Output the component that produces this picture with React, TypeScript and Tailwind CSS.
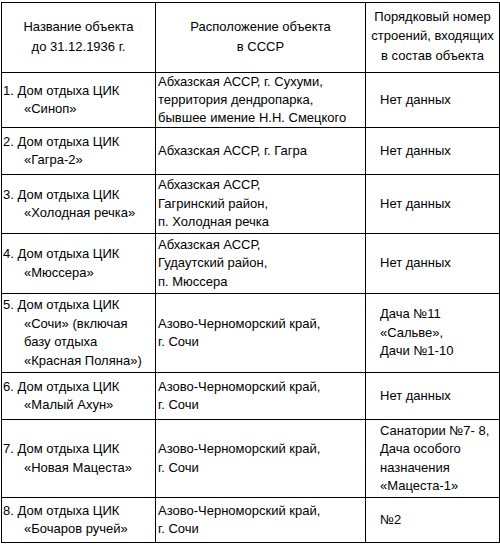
type Row = {
  name: string[];
  place: string[];
  num: string[];
  h: string;
};

const rows: Row[] = [
  {
    name: ["1. Дом отдыха ЦИК", "«Синоп»"],
    place: ["Абхазская АССР, г. Сухуми,", "территория дендропарка,", "бывшее имение Н.Н. Смецкого"],
    num: ["Нет данных"],
    h: "h-[55px] leading-[18px]",
  },
  {
    name: ["2. Дом отдыха ЦИК", "«Гагра-2»"],
    place: ["Абхазская АССР, г. Гагра"],
    num: ["Нет данных"],
    h: "h-[47px]",
  },
  {
    name: ["3. Дом отдыха ЦИК", "«Холодная речка»"],
    place: ["Абхазская АССР,", "Гагринский район,", "п. Холодная речка"],
    num: ["Нет данных"],
    h: "h-[59px]",
  },
  {
    name: ["4. Дом отдыха ЦИК", "«Мюссера»"],
    place: ["Абхазская АССР,", "Гудаутский район,", "п. Мюссера"],
    num: ["Нет данных"],
    h: "h-[60px]",
  },
  {
    name: ["5. Дом отдыха ЦИК", "«Сочи» (включая", "базу отдыха", "«Красная Поляна»)"],
    place: ["Азово-Черноморский край,", "г. Сочи"],
    num: ["Дача №11", "«Сальве»,", "Дачи №1-10"],
    h: "h-[79px]",
  },
  {
    name: ["6. Дом отдыха ЦИК", "«Малый Ахун»"],
    place: ["Азово-Черноморский край,", "г. Сочи"],
    num: ["Нет данных"],
    h: "h-[47px]",
  },
  {
    name: ["7. Дом отдыха ЦИК", "«Новая Мацеста»"],
    place: ["Азово-Черноморский край,", "г. Сочи"],
    num: ["Санатории №7- 8,", "Дача особого", "назначения", "«Мацеста-1»"],
    h: "h-[78px]",
  },
  {
    name: ["8. Дом отдыха ЦИК", "«Бочаров ручей»"],
    place: ["Азово-Черноморский край,", "г. Сочи"],
    num: ["№2"],
    h: "h-[45px]",
  },
];

const Lines = ({ items }: { items: string[] }) => (
  <>
    {items.map((t, i) => (
      <div key={i} className="whitespace-nowrap">
        {t}
      </div>
    ))}
  </>
);

export default function App() {
  return (
    <div className="w-[500px] h-[545px] bg-white pt-[2px] pl-[1px] font-['Liberation_Sans',Arial,sans-serif] text-[13px] leading-[18.5px] text-black">
      <table className="border-collapse table-fixed w-[498px]">
        <colgroup>
          <col className="w-[154px]" />
          <col className="w-[210px]" />
          <col className="w-[134px]" />
        </colgroup>
        <thead>
          <tr className="h-[70px] leading-[19.5px]">
            <th className="border border-black font-normal text-center align-middle pb-[2px]">
              <Lines items={["Название объекта", "до 31.12.1936 г."]} />
            </th>
            <th className="border border-black font-normal text-center align-middle pb-[2px]">
              <Lines items={["Расположение объекта", "в СССР"]} />
            </th>
            <th className="border border-black font-normal text-center align-middle pb-[3px]">
              <Lines items={["Порядковый номер", "строений, входящих", "в состав объекта"]} />
            </th>
          </tr>
        </thead>
        <tbody>
          {rows.map((r, i) => (
            <tr key={i} className={r.h}>
              <td className="border border-black align-middle p-0 pl-[1px]">
                {r.name.map((t, j) => (
                  <div key={j} className={j === 0 ? "whitespace-nowrap" : "whitespace-nowrap pl-[21px]"}>
                    {t}
                  </div>
                ))}
              </td>
              <td className="border border-black align-middle p-0 pl-[2px]">
                <Lines items={r.place} />
              </td>
              <td className="border border-black align-middle p-0 pl-[14px] overflow-hidden">
                <Lines items={r.num} />
              </td>
            </tr>
          ))}
        </tbody>
      </table>
    </div>
  );
}
